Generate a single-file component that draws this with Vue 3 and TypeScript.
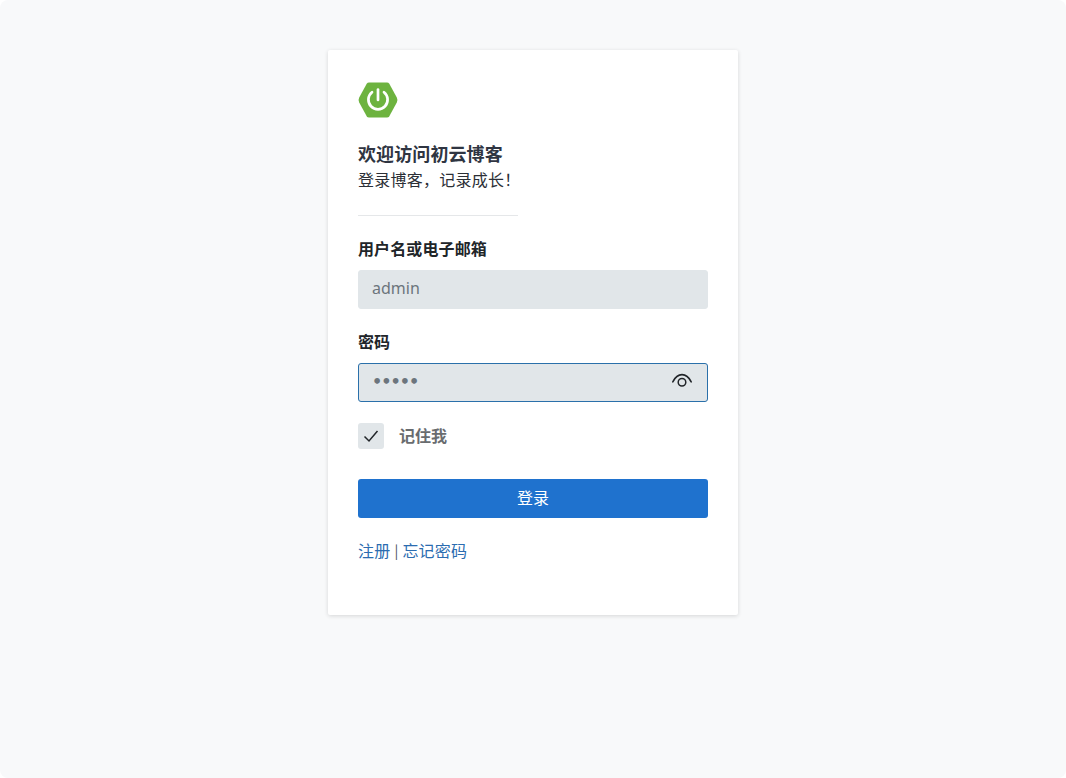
<script setup lang="ts">
import { ref } from 'vue'
const username = ref('admin')
const password = ref('admin')
const remember = ref(true)
</script>

<template>
  <div class="page">
    <main class="card">
      <svg class="logo" width="40" height="36" viewBox="0 0 40 36" aria-label="logo">
        <path d="M11 0.5H29Q30.5 0.5 31.3 1.8L38.8 15.6Q40 18 38.8 20.4L31.3 34.2Q30.5 35.5 29 35.5H11Q9.500 35.500 8.700 34.200L1.200 20.400Q0 18 1.200 15.600L8.700 1.800Q9.500 .5 11 .5Z" fill="#6db33f" />
        <path d="M14 10.200A9.600 9.600 0 1 0 26 10.200" fill="none" stroke="#fff" stroke-width="2.700" stroke-linecap="round" />
        <path d="M20 7.500V18" fill="none" stroke="#fff" stroke-width="2.700" stroke-linecap="round" />
      </svg>
      <h1 class="title">欢迎访问初云博客</h1>
      <p class="subtitle">登录博客，记录成长！</p>
      <hr class="divider" />
      <form class="form" @submit.prevent>
        <label class="label" for="username">用户名或电子邮箱</label>
        <input id="username" v-model="username" class="input" type="text" />
        <label class="label" for="password">密码</label>
        <div class="password-wrap">
          <input id="password" v-model="password" class="input secret" type="password" />
          <svg class="eye" width="22" height="16" viewBox="0 0 22 16" aria-hidden="true">
            <path d="M1.800 9.800C4.300 4.800 7.500 2.600 11 2.600S17.700 4.800 20.200 9.800" fill="none" stroke="#212529" stroke-width="1.600" stroke-linecap="round" />
            <circle cx="11" cy="10.300" r="3.800" fill="none" stroke="#212529" stroke-width="1.500" />
          </svg>
        </div>
        <label class="remember">
          <span class="check">
            <svg v-if="remember" width="16" height="14" viewBox="0 0 16 14" aria-hidden="true">
              <path d="M1.500 7.500L6 12L14.500 2" fill="none" stroke="#212529" stroke-width="1.500" />
            </svg>
          </span>
          <span class="remember-text">记住我</span>
        </label>
        <button class="submit" type="submit">登录</button>
      </form>
      <div class="links">
        <a href="#">注册</a><span class="sep">|</span><a href="#">忘记密码</a>
      </div>
    </main>
  </div>
</template>

<style>
html, body { margin: 0; background: #fff; }
</style>

<style scoped>
.page {
  box-sizing: border-box;
  height: 778px;
  padding-top: 50px;
  background: #f8f9fa;
  border-radius: 8px;
  font-family: "Noto Sans CJK SC", "Noto Sans", sans-serif;
  overflow: hidden;
}
.card {
  box-sizing: border-box;
  width: 410px;
  height: 565px;
  margin: 0 auto;
  padding: 32px 30px 0;
  background: #fff;
  border-radius: 2px;
  box-shadow: 0 1px 4px rgba(0, 0, 0, 0.14);
}
.logo { display: block; }
.title {
  margin: 22px 0 0;
  font-size: 18px;
  line-height: 27px;
  font-weight: 700;
  letter-spacing: 0.1px;
  color: #2f3542;
}
.subtitle {
  margin: 0;
  font-size: 16px;
  line-height: 24px;
  letter-spacing: 0.25px;
  color: #2b2f36;
}
.divider {
  width: 160px;
  height: 1px;
  margin: 24px 0 0;
  border: 0;
  background: #e5e7e9;
}
.form { display: flex; flex-direction: column; }
.label {
  margin-top: 20px;
  font-size: 16px;
  line-height: 24px;
  font-weight: 700;
  letter-spacing: 0.12px;
  color: #212529;
}
.input {
  box-sizing: border-box;
  width: 100%;
  height: 39px;
  margin-top: 10px;
  padding: 0 13px 3px;
  display: block;
  border: 1px solid #e1e6e9;
  border-radius: 3px;
  outline: none;
  background: #e1e6e9;
  font: 16px "Noto Sans", sans-serif;
  color: #6c757d;
}
.secret {
  border-color: #2a70aa;
  font-family: "DejaVu Sans", sans-serif;
  font-weight: 700;
  letter-spacing: -1px;
}
.password-wrap { position: relative; }
.eye { position: absolute; right: 15px; top: 19px; }
.remember {
  display: flex;
  align-items: center;
  gap: 15px;
  margin-top: 21px;
  font-size: 16px;
  font-weight: 700;
  color: #696c6f;
}
.remember-text { padding-bottom: 2px; }
.check {
  display: flex;
  align-items: center;
  justify-content: center;
  width: 26px;
  height: 26px;
  border-radius: 3px;
  background: #e1e6e9;
}
.submit {
  height: 39px;
  margin-top: 30px;
  padding: 0 0 3px;
  border: 0;
  border-radius: 3px;
  background: #1f72ce;
  color: #fff;
  font: 16px "Noto Sans CJK SC", sans-serif;
}
.links {
  display: flex;
  margin-top: 20px;
  font-size: 16px;
  line-height: 24px;
  letter-spacing: 0.2px;
  color: #495057;
}
.links a { color: #2b6cb0; text-decoration: none; }
.sep { margin: 0 4px 0 4px; font-size: 14px; }
</style>
